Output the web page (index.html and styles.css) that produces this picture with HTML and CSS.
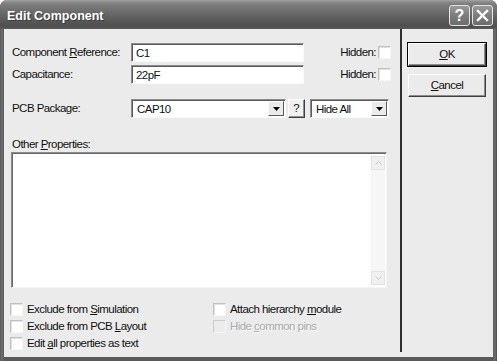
FILE: index.html
```html
<!DOCTYPE html>
<html>
<head>
<meta charset="utf-8">
<title>Edit Component</title>
<link rel="stylesheet" href="styles.css">
</head>
<body>
<div class="window">
  <div class="titlebar">
    <span class="title">Edit Component</span>
    <div class="tb-buttons">
      <span class="tb-btn help">?</span>
      <span class="tb-btn close">
        <svg width="13" height="13" viewBox="0 0 13 13"><path d="M2 2 L11 11 M11 2 L2 11" stroke="#fff" stroke-width="2.4" stroke-linecap="square"/></svg>
      </span>
    </div>
  </div>
  <div class="client">
    <div class="main">
      <div class="row">
        <span class="lbl">Component <u>R</u>eference:</span>
        <div class="field">C1</div>
        <span class="hid-lbl">Hidden:</span>
        <span class="cb"></span>
      </div>
      <div class="row row2">
        <span class="lbl">Capacitance:</span>
        <div class="field">22pF</div>
        <span class="hid-lbl">Hidden:</span>
        <span class="cb"></span>
      </div>
      <div class="row row3">
        <span class="lbl">PCB Package:</span>
        <div class="combo pkg">
          <span class="combo-text">CAP10</span>
          <span class="drop"><svg width="7" height="4" viewBox="0 0 7 4"><path d="M0 0 H7 L3.5 4 Z" fill="#000"/></svg></span>
        </div>
        <span class="qbtn">?</span>
        <div class="combo hideall">
          <span class="combo-text">Hide All</span>
          <span class="drop"><svg width="7" height="4" viewBox="0 0 7 4"><path d="M0 0 H7 L3.5 4 Z" fill="#000"/></svg></span>
        </div>
      </div>
      <div class="other-lbl">Other <u>P</u>roperties:</div>
      <div class="ta">
        <div class="scroll">
          <span class="sb-btn"><svg width="7" height="4" viewBox="0 0 7 4"><path d="M0.5 3.5 L3.5 0.5 L6.5 3.5" fill="none" stroke="#c4c4c4" stroke-width="1"/></svg></span>
          <span class="sb-track"></span>
          <span class="sb-btn"><svg width="7" height="4" viewBox="0 0 7 4"><path d="M0.5 0.5 L3.5 3.5 L6.5 0.5" fill="none" stroke="#c4c4c4" stroke-width="1"/></svg></span>
        </div>
      </div>
      <div class="checks">
        <div class="col col1">
          <div class="chk"><span class="cb"></span><span>Exclude from <u>S</u>imulation</span></div>
          <div class="chk"><span class="cb"></span><span>Exclude from PCB <u>L</u>ayout</span></div>
          <div class="chk"><span class="cb"></span><span>Edit <u>a</u>ll properties as text</span></div>
        </div>
        <div class="col">
          <div class="chk"><span class="cb"></span><span>Attach hierarchy <u>m</u>odule</span></div>
          <div class="chk disabled"><span class="cb"></span><span>Hide <u>c</u>ommon pins</span></div>
        </div>
      </div>
    </div>
    <div class="sep"></div>
    <div class="side">
      <button class="btn default"><u>O</u>K</button>
      <button class="btn cancel"><u>C</u>ancel</button>
    </div>
  </div>
</div>
</body>
</html>
```

FILE: styles.css
```css
html, body {
  margin: 0;
  padding: 0;
  background: #fff;
}
body {
  font-family: "Liberation Sans", Arial, sans-serif;
  font-size: 11.5px;
  letter-spacing: -0.55px;
  color: #111;
  line-height: 13px;
}
.window {
  width: 497px;
  height: 361px;
  display: flex;
  flex-direction: column;
  background: linear-gradient(90deg, #5a5a5a, #6e6e6e 2px, #5a5a5a 4px, #5a5a5a 493px, #6e6e6e 495px, #4a4a4a);
  border-radius: 7px 7px 0 0;
  overflow: hidden;
}
.titlebar {
  height: 29px;
  flex: none;
  display: flex;
  align-items: center;
  justify-content: space-between;
  box-sizing: border-box;
  padding: 2px 4px 0 7px;
  background: linear-gradient(#a4a4a4 0, #8a8a8a 2px, #7a7a7a 5px, #6c6c6c 12px, #5a5a5a 20px, #4e4e4e 26px, #5a5a5a 29px);
}
.title {
  color: #fff;
  font-size: 12.5px;
  font-weight: bold;
  letter-spacing: 0;
  text-shadow: 1px 1px 0 #3a3a3a;
  padding-top: 2px;
}
.tb-buttons {
  display: flex;
  gap: 2px;
}
.tb-btn {
  width: 21px;
  height: 21px;
  box-sizing: border-box;
  border: 1px solid #e4e4e4;
  border-radius: 3px;
  background: linear-gradient(#9a9a9a, #7c7c7c 50%, #6c6c6c);
  display: flex;
  align-items: center;
  justify-content: center;
  color: #fff;
  font-weight: bold;
  font-size: 16px;
  letter-spacing: 0;
}
.client {
  flex: 1;
  margin: 0 4px 4px;
  background: #ebebeb;
  display: flex;
}
.main {
  width: 396px;
  flex: none;
  box-sizing: border-box;
  padding: 14px 0 0 6px;
}
.row {
  display: flex;
  align-items: center;
  height: 19px;
}
.row2 {
  margin-top: 3px;
}
.row3 {
  margin-top: 15px;
}
.lbl {
  width: 119px;
  margin-left: 2px;
  flex: none;
}
.field {
  width: 173px;
  height: 19px;
  flex: none;
  box-sizing: border-box;
  background: #fff;
  border: 1px solid;
  border-color: #8c8c8c #fafafa #fafafa #8c8c8c;
  box-shadow: inset 1px 1px #5a5a5a;
  padding: 3px 4px 0;
}
.hid-lbl {
  width: 72px;
  text-align: right;
  flex: none;
  margin-right: 2px;
}
.cb {
  width: 13px;
  height: 13px;
  flex: none;
  box-sizing: border-box;
  background: #fff;
  border: 1px solid;
  border-color: #c0c0c0 #f6f6f6 #f6f6f6 #c0c0c0;
  box-shadow: inset 1px 1px #e2e2e2;
}
.combo {
  height: 19px;
  flex: none;
  box-sizing: border-box;
  background: #fff;
  border: 1px solid;
  border-color: #8c8c8c #fafafa #fafafa #8c8c8c;
  box-shadow: inset 1px 1px #5a5a5a;
  padding: 1px;
  display: flex;
  align-items: stretch;
}
.combo-text {
  flex: 1;
  padding: 2px 0 0 4px;
}
.pkg {
  width: 155px;
}
.hideall {
  width: 79px;
}
.drop {
  width: 16px;
  box-sizing: border-box;
  background: #ebebeb;
  border: 1px solid;
  border-color: #fff #5a5a5a #5a5a5a #fff;
  display: flex;
  align-items: center;
  justify-content: center;
}
.qbtn {
  width: 17px;
  height: 19px;
  flex: none;
  box-sizing: border-box;
  margin: 0 5px 0 2px;
  background: #f0f0f0;
  border: 1px solid;
  border-color: #fff #404040 #404040 #fff;
  box-shadow: inset -1px -1px #909090;
  text-align: center;
  padding-top: 2px;
  letter-spacing: 0;
}
.other-lbl {
  margin: 20px 0 0 2px;
  height: 13px;
}
.ta {
  width: 376px;
  height: 136px;
  margin: 1px 0 0 1px;
  box-sizing: border-box;
  background: #fff;
  border: 1px solid;
  border-color: #8a8a8a #f4f4f4 #f4f4f4 #8a8a8a;
  box-shadow: inset 1px 1px #6a6a6a;
  display: flex;
  justify-content: flex-end;
  padding: 3px 1px 2px 0;
}
.scroll {
  width: 14px;
  display: flex;
  flex-direction: column;
  background: #f6f6f6;
  border-left: 1px solid #fafafa;
}
.sb-btn {
  height: 14px;
  box-sizing: border-box;
  background: #f0f0f0;
  border: 1px solid #e2e2e2;
  display: flex;
  align-items: center;
  justify-content: center;
}
.sb-track {
  flex: 1;
}
.checks {
  display: flex;
  margin-top: 13px;
}
.col1 {
  width: 203px;
  flex: none;
}
.chk {
  height: 17px;
  display: flex;
  align-items: center;
  gap: 4px;
}
.chk.disabled {
  color: #aaaaaa;
  text-shadow: 1px 1px 0 #fafafa;
}
.chk.disabled .cb {
  background: #ebebeb;
  border-color: #cccccc #f6f6f6 #f6f6f6 #cccccc;
  box-shadow: none;
}
.sep {
  width: 2px;
  flex: none;
  background: #2e2e2e;
  margin-bottom: 5px;
}
.side {
  flex: 1;
  padding: 14px 0 0 6px;
}
.btn {
  display: block;
  width: 78px;
  height: 23px;
  box-sizing: border-box;
  padding: 0;
  margin: 0;
  background: #ebebeb;
  border: 1px solid;
  border-color: #fff #404040 #404040 #fff;
  box-shadow: inset -1px -1px #8c8c8c;
  font-family: inherit;
  font-size: 11.5px;
  letter-spacing: -0.55px;
  color: #111;
  line-height: 13px;
}
.btn.default {
  outline: 1px solid #000;
}
.btn.cancel {
  margin-top: 8px;
}
```
